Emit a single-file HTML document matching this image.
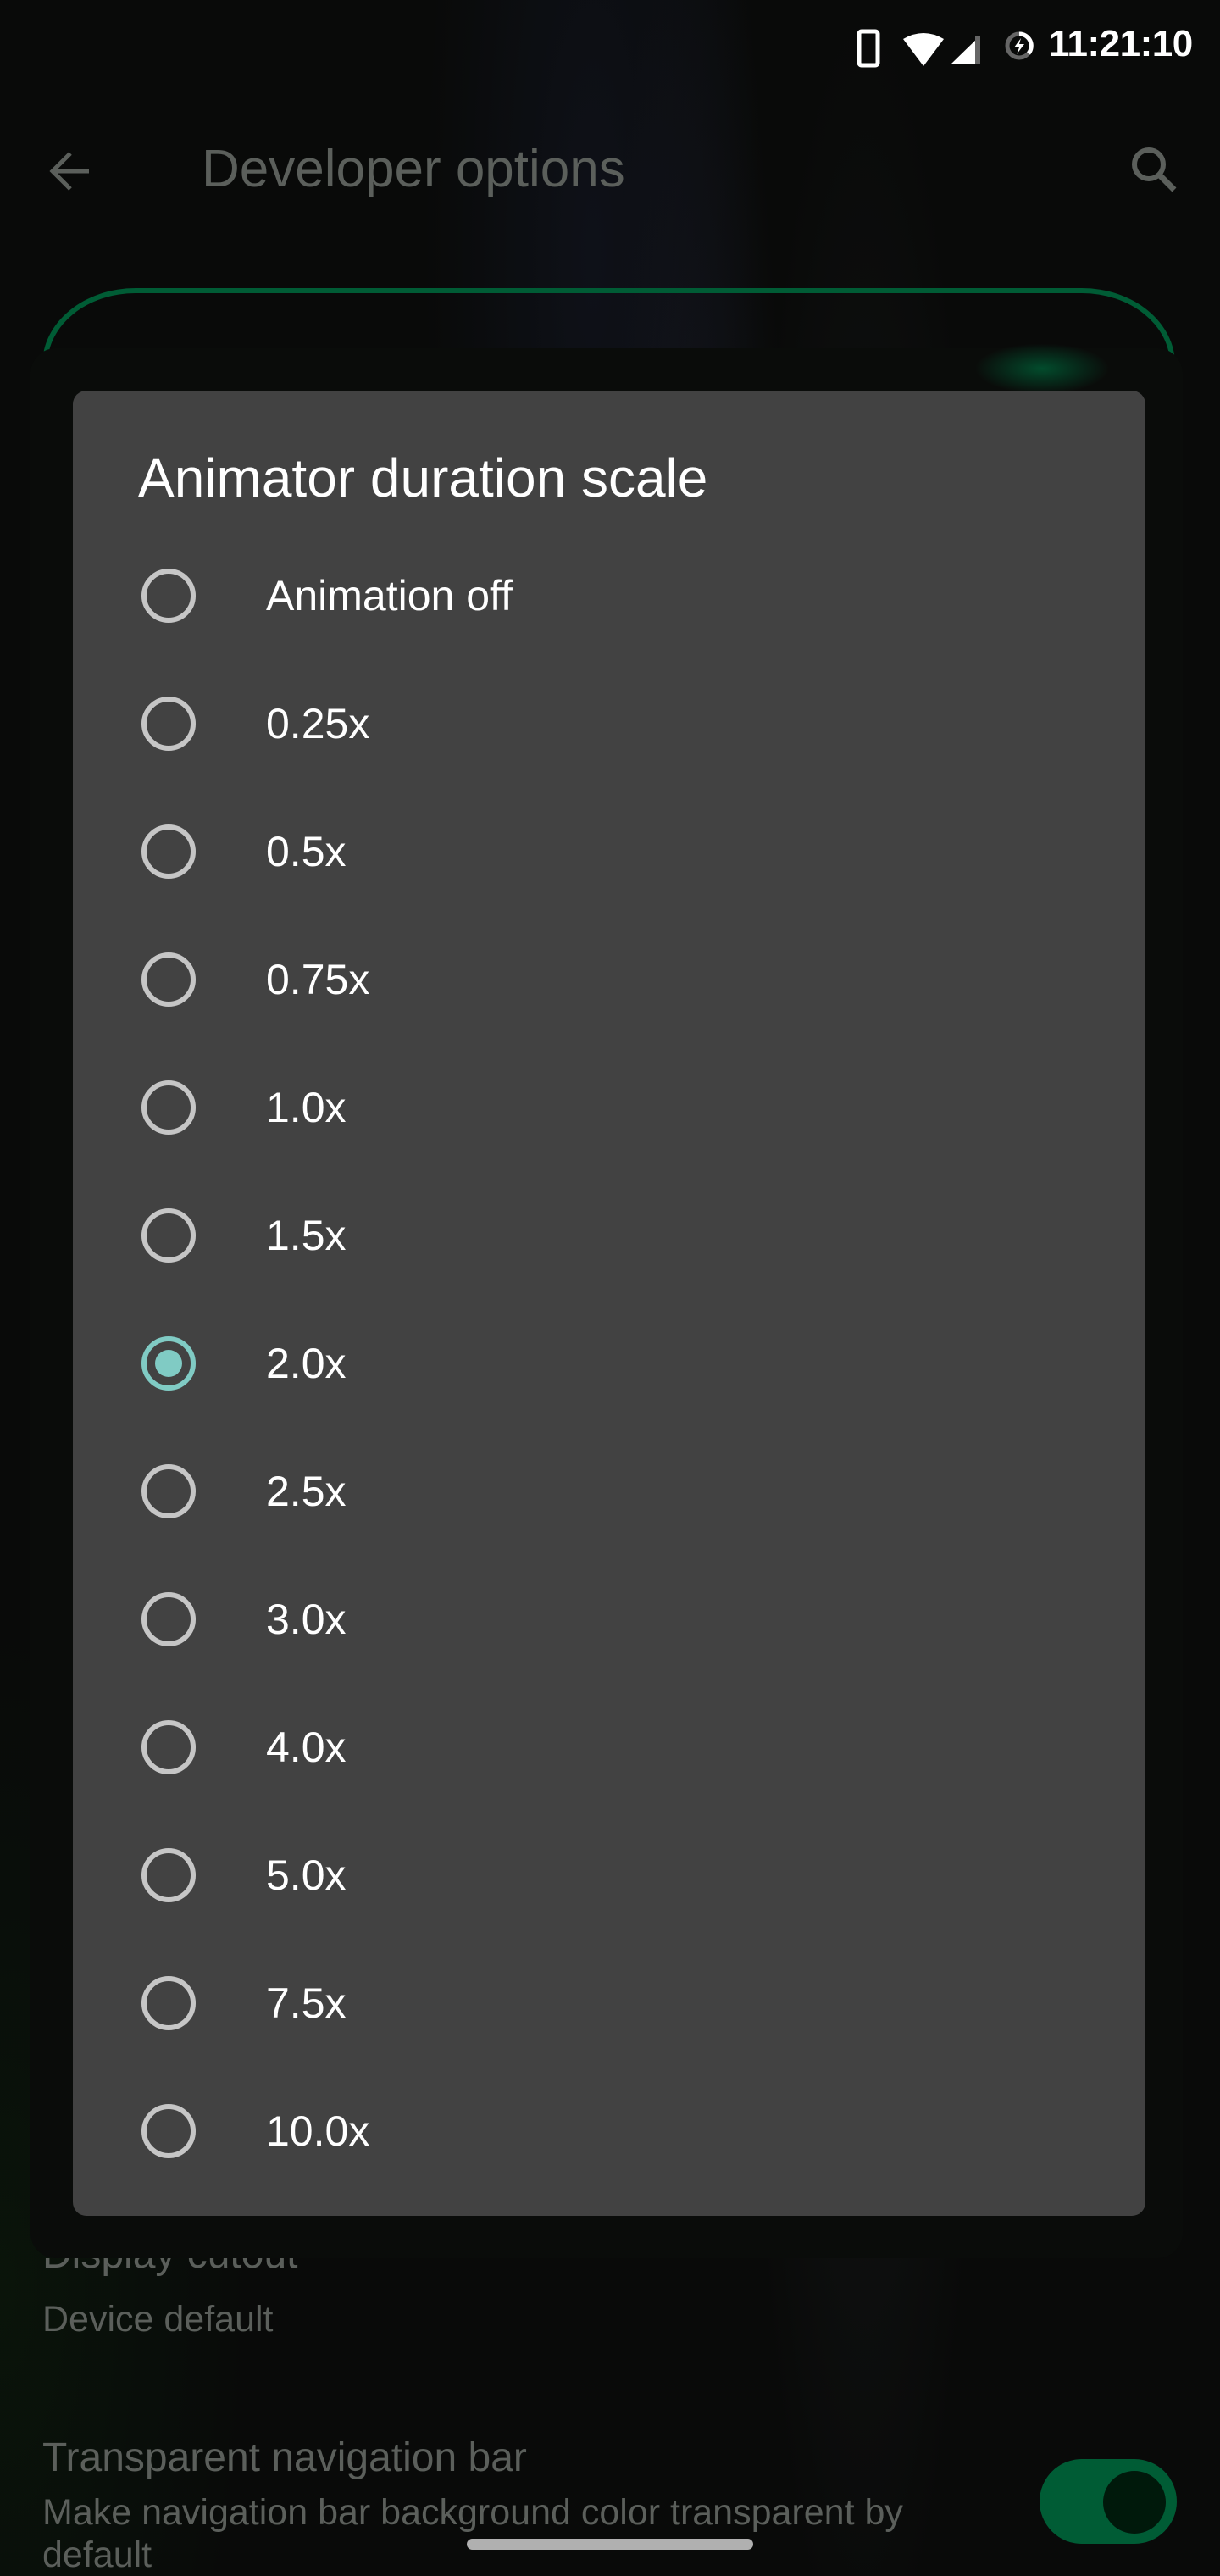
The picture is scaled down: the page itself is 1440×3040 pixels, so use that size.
<!DOCTYPE html>
<html><head><meta charset="utf-8">
<style>
html,body{margin:0;padding:0;}
body{width:1440px;height:3040px;position:relative;overflow:hidden;background:#090a09;font-family:"Liberation Sans",Roboto,sans-serif;}
.bg{position:absolute;inset:0;background:
 radial-gradient(ellipse 120px 1400px at 820px 1200px,rgba(30,32,48,0.55),transparent),
 radial-gradient(ellipse 160px 1600px at 1020px 1600px,rgba(35,36,40,0.5),transparent),
 radial-gradient(ellipse 200px 900px at 700px 300px,rgba(20,24,40,0.5),transparent),
 radial-gradient(ellipse 300px 800px at 0px 2700px,rgba(10,30,12,0.5),transparent);}
.abs{position:absolute;}
.dimtext{color:#5b5f5b;white-space:nowrap;}
.dialog{position:absolute;left:86px;top:461px;width:1266px;height:2154px;background:#424242;border-radius:16px;}
.title{position:absolute;left:77px;top:66px;font-size:64px;color:#fff;white-space:nowrap;}
.item{position:absolute;left:0;height:150px;width:1266px;}
.radio{position:absolute;left:81px;width:64px;height:64px;border:6px solid #c6c6c6;border-radius:50%;box-sizing:border-box;top:43px;}
.radio.sel{border-color:#80cbc4;}
.radio.sel::after{content:"";position:absolute;left:10px;top:10px;width:32px;height:32px;border-radius:50%;background:#80cbc4;}
.label{position:absolute;left:228px;top:48px;font-size:50px;color:#fff;line-height:54px;white-space:nowrap;}
</style></head><body>
<div class="bg"></div>

<svg class="abs" style="left:1008px;top:34px" width="160" height="48" viewBox="0 0 160 48">
 <rect x="6" y="3" width="22" height="40" rx="3" fill="none" stroke="#fff" stroke-width="5"/>
 <path d="M58 12 Q82 -2 106 12 L82 44 Z" fill="#fff"/>
 <path d="M114 42 L149 8 L149 42 Z" fill="#fff"/>
 <rect x="143" y="8" width="6" height="34" fill="#666"/>
</svg>
<svg class="abs" style="left:1184px;top:35px" width="38" height="38" viewBox="0 0 38 38">
 <circle cx="19" cy="19" r="14" fill="none" stroke="#666" stroke-width="5"/>
 <path d="M19 5 A14 14 0 0 1 30 28" fill="none" stroke="#fff" stroke-width="5"/>
 <path d="M21 10 L13 21 L19 21 L16 29 L25 17 L19 17 Z" fill="#fff"/>
</svg>
<div class="abs" style="left:1238px;top:27px;font-size:44px;color:#fff;font-weight:600;letter-spacing:-0.5px;">11:21:10</div>

<svg class="abs" style="left:55px;top:175px" width="56" height="54" viewBox="0 0 56 54">
 <path d="M50 27 H8 M28 6 L7 27 L28 48" fill="none" stroke="#5b5f5b" stroke-width="5"/>
</svg>
<div class="abs dimtext" style="left:238px;top:164px;font-size:62px;">Developer options</div>
<svg class="abs" style="left:1330px;top:168px" width="64" height="64" viewBox="0 0 64 64">
 <circle cx="26" cy="26" r="17" fill="none" stroke="#5b5f5b" stroke-width="6"/>
 <path d="M38 38 L56 56" stroke="#5b5f5b" stroke-width="7"/>
</svg>

<div class="abs" style="left:50px;top:340px;width:1337px;height:260px;border:6px solid #005c35;border-bottom:none;border-radius:110px 110px 0 0/90px 90px 0 0;box-sizing:border-box;"></div>
<div class="abs" style="left:36px;top:411px;width:1360px;height:2254px;background:#0a0c0a;border-radius:30px;"></div>
<div class="abs" style="left:1150px;top:405px;width:160px;height:60px;background:radial-gradient(ellipse at center,rgba(0,92,53,0.8),transparent 70%);"></div>

<div class="abs" style="left:0;top:2665px;width:1440px;height:80px;overflow:hidden;">
 <div class="abs dimtext" style="left:50px;top:-32px;font-size:48px;">Display cutout</div>
</div>
<div class="abs dimtext" style="left:50px;top:2713px;font-size:43px;">Device default</div>
<div class="abs dimtext" style="left:50px;top:2873px;font-size:48px;">Transparent navigation bar</div>
<div class="abs dimtext" style="left:50px;top:2940px;font-size:43px;line-height:50px;white-space:normal;width:1100px;">Make navigation bar background color transparent by default</div>
<div class="abs" style="left:1227px;top:2902px;width:162px;height:100px;border-radius:50px;background:#005c35;"></div>
<div class="abs" style="left:1302px;top:2916px;width:74px;height:74px;border-radius:50%;background:#00190b;"></div>
<div class="abs" style="left:551px;top:2996px;width:338px;height:13px;border-radius:7px;background:#b0b0b0;"></div>

<div class="dialog">
 <div class="title">Animator duration scale</div>
 <div class="item" style="top:167px"><div class="radio"></div><div class="label">Animation off</div></div>
 <div class="item" style="top:318px"><div class="radio"></div><div class="label">0.25x</div></div>
 <div class="item" style="top:469px"><div class="radio"></div><div class="label">0.5x</div></div>
 <div class="item" style="top:620px"><div class="radio"></div><div class="label">0.75x</div></div>
 <div class="item" style="top:771px"><div class="radio"></div><div class="label">1.0x</div></div>
 <div class="item" style="top:922px"><div class="radio"></div><div class="label">1.5x</div></div>
 <div class="item" style="top:1073px"><div class="radio sel"></div><div class="label">2.0x</div></div>
 <div class="item" style="top:1224px"><div class="radio"></div><div class="label">2.5x</div></div>
 <div class="item" style="top:1375px"><div class="radio"></div><div class="label">3.0x</div></div>
 <div class="item" style="top:1526px"><div class="radio"></div><div class="label">4.0x</div></div>
 <div class="item" style="top:1677px"><div class="radio"></div><div class="label">5.0x</div></div>
 <div class="item" style="top:1828px"><div class="radio"></div><div class="label">7.5x</div></div>
 <div class="item" style="top:1979px"><div class="radio"></div><div class="label">10.0x</div></div>
</div>
</body></html>
